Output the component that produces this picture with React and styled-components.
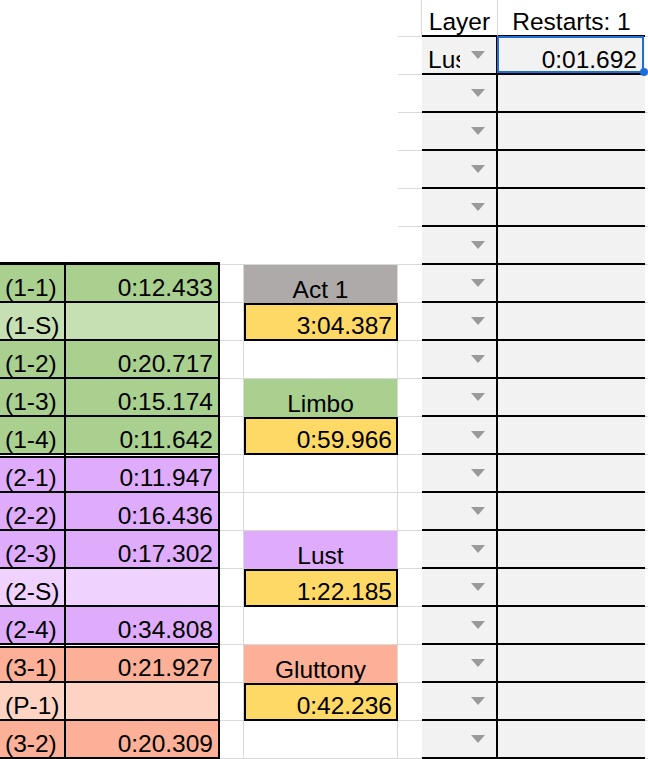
import React from "react";
import styled, { createGlobalStyle } from "styled-components";

const GRID = "#d9d9d9";
const INK = "#000";
const SEL = "#1f6fd9";

const FILLS = {
  green: "#a9d08e",
  greenLight: "#c6e0b4",
  purple: "#dfabfb",
  purpleLight: "#efd2fd",
  salmon: "#fbb097",
  salmonLight: "#fdd4c4",
  gray: "#aeaaaa",
  yellow: "#ffd966",
  panel: "#f2f2f2",
};

const Global = createGlobalStyle`
  html, body { margin: 0; padding: 0; background: #fff; }
  body { font-family: "Liberation Sans", Arial, sans-serif; }
`;

const Sheet = styled.div`
  display: grid;
  grid-template-columns: 66px 154px 24px 154px 24px 76px 147px 3px;
  grid-template-rows: 37px repeat(19, 38px);
  width: 648px;
  height: 759px;
  overflow: hidden;
  font-size: 24.5px;
  color: ${INK};
  background: #fff;
`;

const Cell = styled.div`
  box-sizing: border-box;
  position: relative;
  display: flex;
  align-items: flex-end;
  min-width: 0;
  background: ${(p) => p.$bg || "#fff"};
`;

const Text = styled.span`
  display: block;
  flex: 1;
  min-width: 0;
  line-height: 1.15;
  margin-bottom: -1px;
  white-space: nowrap;
  overflow-x: ${(p) => (p.$clip ? "clip" : "visible")};
  padding: 0 ${(p) => p.$pr ?? 6}px 0 ${(p) => p.$pl ?? 6}px;
  text-align: ${(p) => p.$align || "left"};
`;

/* top white area, no gridlines */
const BlankCell = styled(Cell)`
  border-bottom: ${(p) =>
    p.$tableTop ? `3px solid ${INK}` : p.$grid ? `1px solid ${GRID}` : "none"};
`;

/* left table: stage label */
const LabelCell = styled(Cell)`
  border-right: 2px solid ${INK};
  border-bottom: 2px solid ${INK};
  box-shadow: ${(p) =>
    p.$groupStart ? `inset 0 1px 0 #f6f6f6, inset 0 3px 0 ${INK}` : "none"};
`;

/* left table: time */
const TimeCell = styled(LabelCell)``;

/* white gap column with gridlines */
const GapCell = styled(Cell)`
  border-right: 1px solid ${GRID};
  border-bottom: 1px solid ${GRID};
`;

/* summary column: blank, title, total */
const SummaryBlank = styled(Cell)`
  border-right: 1px solid ${GRID};
  border-bottom: 1px solid ${GRID};
`;

const SummaryTitle = styled(Cell)`
  border-right: 1px solid ${GRID};
`;

const SummaryTotal = styled(Cell)`
  border: 2px solid ${INK};
  background: ${FILLS.yellow};
`;

const SpacerCell = styled(Cell)`
  border-bottom: 1px solid ${GRID};
  border-right: ${(p) => (p.$edge ? `1px solid ${GRID}` : "none")};
`;

const HeadCell = styled(Cell)`
  border-bottom: 2px solid ${INK};
  border-right: ${(p) => (p.$sep ? `1px solid ${GRID}` : "none")};
`;

const LayerCell = styled(Cell)`
  background: ${FILLS.panel};
  border-bottom: 2px solid ${INK};
  border-right: 2px solid ${INK};
`;

const RestartCell = styled(Cell)`
  background: ${FILLS.panel};
  border-bottom: 2px solid ${INK};
`;

const EdgeCell = styled(Cell)`
  border-bottom: 1px solid ${GRID};
`;

const DropButton = styled.span`
  flex: 0 0 36px;
  align-self: stretch;
  display: flex;
  align-items: center;
  justify-content: center;
`;

const Caret = styled.span`
  width: 0;
  height: 0;
  border-left: 7.5px solid transparent;
  border-right: 7.5px solid transparent;
  border-top: 8px solid #9a9a9a;
`;

const Selection = styled.span`
  position: absolute;
  left: -1px;
  top: -1px;
  right: 1px;
  bottom: 0;
  border: 2px solid ${SEL};
  z-index: 3;
  pointer-events: none;
  &::after {
    content: "";
    position: absolute;
    right: -6px;
    bottom: -5px;
    width: 8px;
    height: 8px;
    border-radius: 50%;
    background: ${SEL};
  }
`;

const stages = [
  { label: "(1-1)", time: "0:12.433", fill: "green" },
  { label: "(1-S)", time: "", fill: "greenLight" },
  { label: "(1-2)", time: "0:20.717", fill: "green" },
  { label: "(1-3)", time: "0:15.174", fill: "green" },
  { label: "(1-4)", time: "0:11.642", fill: "green" },
  { label: "(2-1)", time: "0:11.947", fill: "purple", start: true },
  { label: "(2-2)", time: "0:16.436", fill: "purple" },
  { label: "(2-3)", time: "0:17.302", fill: "purple" },
  { label: "(2-S)", time: "", fill: "purpleLight" },
  { label: "(2-4)", time: "0:34.808", fill: "purple" },
  { label: "(3-1)", time: "0:21.927", fill: "salmon", start: true },
  { label: "(P-1)", time: "", fill: "salmonLight" },
  { label: "(3-2)", time: "0:20.309", fill: "salmon" },
];

const summary = [
  { kind: "title", text: "Act 1", fill: "gray" },
  { kind: "total", text: "3:04.387" },
  { kind: "blank" },
  { kind: "title", text: "Limbo", fill: "green" },
  { kind: "total", text: "0:59.966" },
  { kind: "blank" },
  { kind: "blank" },
  { kind: "title", text: "Lust", fill: "purple" },
  { kind: "total", text: "1:22.185" },
  { kind: "blank" },
  { kind: "title", text: "Gluttony", fill: "salmon" },
  { kind: "total", text: "0:42.236" },
  { kind: "blank" },
];

function Summary({ item }) {
  if (item.kind === "title")
    return (
      <SummaryTitle $bg={FILLS[item.fill]}>
        <Text $align="center">{item.text}</Text>
      </SummaryTitle>
    );
  if (item.kind === "total")
    return (
      <SummaryTotal>
        <Text $align="right" $pr={4}>
          {item.text}
        </Text>
      </SummaryTotal>
    );
  return <SummaryBlank />;
}

function Layer({ text }) {
  return (
    <LayerCell>
      <Text $pl={6} $pr={0} $clip>
        {text}
      </Text>
      <DropButton>
        <Caret />
      </DropButton>
    </LayerCell>
  );
}

export default function App() {
  const rows = [];

  // header row
  rows.push(
    <React.Fragment key="h">
      <BlankCell />
      <BlankCell />
      <BlankCell />
      <BlankCell />
      <SpacerCell $edge />
      <HeadCell $sep>
        <Text $align="center" $pl={0} $pr={0}>
          Layer
        </Text>
      </HeadCell>
      <HeadCell>
        <Text $align="center" $pl={0} $pr={0}>
          Restarts: 1
        </Text>
      </HeadCell>
      <EdgeCell />
    </React.Fragment>
  );

  for (let k = 1; k <= 19; k++) {
    const i = k - 7;
    const stage = i >= 0 ? stages[i] : null;
    const left = stage ? (
      <>
        <LabelCell $bg={FILLS[stage.fill]} $groupStart={stage.start}>
          <Text $pl={5}>{stage.label}</Text>
        </LabelCell>
        <TimeCell $bg={FILLS[stage.fill]} $groupStart={stage.start}>
          <Text $align="right" $pr={5}>
            {stage.time}
          </Text>
        </TimeCell>
        <GapCell />
        <Summary item={summary[i]} />
      </>
    ) : (
      <>
        <BlankCell $tableTop={k === 6} />
        <BlankCell $tableTop={k === 6} />
        <BlankCell $grid={k === 6} />
        <BlankCell $grid={k === 6} />
      </>
    );

    rows.push(
      <React.Fragment key={k}>
        {left}
        <SpacerCell />
        <Layer text={k === 1 ? "Lust" : ""} />
        <RestartCell>
          {k === 1 && (
            <>
              <Text $align="right" $pr={8}>
                0:01.692
              </Text>
              <Selection />
            </>
          )}
        </RestartCell>
        <EdgeCell />
      </React.Fragment>
    );
  }

  return (
    <>
      <Global />
      <Sheet>{rows}</Sheet>
    </>
  );
}
